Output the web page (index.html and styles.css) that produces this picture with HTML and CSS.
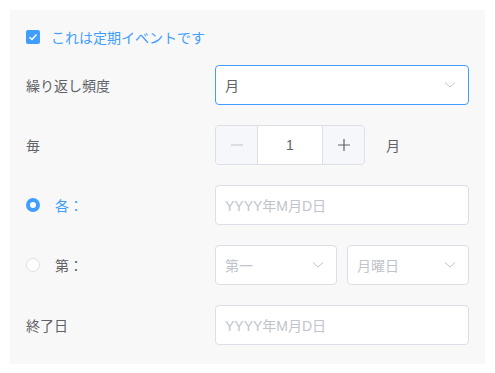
FILE: index.html
```html
<!DOCTYPE html>
<html lang="ja">
  <head>
    <meta charset="UTF-8" />
    <meta name="viewport" content="width=device-width, initial-scale=1.0" />
    <title>定期イベント</title>
    <link rel="stylesheet" href="styles.css">
  </head>
  <body>
    <div class="panel">
      <label class="check-row">
        <span class="checkbox">
          <svg width="10" height="8" viewBox="0 0 10 8"><path d="M1.5 4.2 L4 6.5 L8.5 1.5" fill="none" stroke="#fff" stroke-width="1.5"/></svg>
        </span>
        <span class="check-label">これは定期イベントです</span>
      </label>

      <div class="form-row">
        <div class="label">繰り返し頻度</div>
        <div class="select is-focus">
          <span class="select-value">月</span>
          <svg class="arrow" width="12" height="8" viewBox="0 0 12 8"><path d="M1 1.5 L6 6 L11 1.5" fill="none" stroke="#c0c4cc" stroke-width="1"/></svg>
        </div>
      </div>

      <div class="form-row">
        <div class="label">毎</div>
        <div class="counter">
          <span class="counter-btn is-disabled">
            <svg width="14" height="14" viewBox="0 0 14 14"><path d="M1 7 H13" stroke="#c0c4cc" stroke-width="1.2"/></svg>
          </span>
          <span class="counter-value">1</span>
          <span class="counter-btn">
            <svg width="14" height="14" viewBox="0 0 14 14"><path d="M1 7 H13 M7 1 V13" stroke="#606266" stroke-width="1.2"/></svg>
          </span>
        </div>
        <span class="unit">月</span>
      </div>

      <div class="form-row">
        <div class="label">
          <span class="radio is-checked"></span>
          <span class="radio-label is-active">各：</span>
        </div>
        <div class="input placeholder">YYYY年M月D日</div>
      </div>

      <div class="form-row">
        <div class="label">
          <span class="radio"></span>
          <span class="radio-label">第：</span>
        </div>
        <div class="select-pair">
          <div class="select">
            <span class="placeholder">第一</span>
            <svg class="arrow" width="12" height="8" viewBox="0 0 12 8"><path d="M1 1.5 L6 6 L11 1.5" fill="none" stroke="#c0c4cc" stroke-width="1"/></svg>
          </div>
          <div class="select">
            <span class="placeholder">月曜日</span>
            <svg class="arrow" width="12" height="8" viewBox="0 0 12 8"><path d="M1 1.5 L6 6 L11 1.5" fill="none" stroke="#c0c4cc" stroke-width="1"/></svg>
          </div>
        </div>
      </div>

      <div class="form-row">
        <div class="label">終了日</div>
        <div class="input placeholder">YYYY年M月D日</div>
      </div>
    </div>
  </body>
</html>
```

FILE: styles.css
```css
body {
  margin: 0;
  padding: 10px;
  background-color: #fff;
  font-family: "Liberation Sans", "Noto Sans CJK JP", sans-serif;
  font-size: 14px;
  color: #606266;
}
.panel {
  width: 443px;
  height: 317px;
  background-color: #f8f8f9;
  padding: 17px 16px 20px;
}
.check-row {
  display: flex;
  align-items: center;
  height: 20px;
  margin-bottom: 18px;
}
.checkbox {
  width: 14px;
  height: 14px;
  border-radius: 2px;
  background-color: #409eff;
  display: flex;
  justify-content: center;
  align-items: center;
  margin-right: 11px;
}
.check-label {
  color: #409eff;
}
.form-row {
  display: flex;
  align-items: center;
  height: 40px;
  margin-bottom: 20px;
}
.form-row:last-child {
  margin-bottom: 0;
}
.label {
  width: 189px;
  display: flex;
  align-items: center;
}
.select,
.input {
  box-sizing: border-box;
  height: 40px;
  width: 254px;
  background-color: #fff;
  border: 1px solid #dcdfe6;
  border-radius: 4px;
  padding: 0 12px 0 9px;
  display: flex;
  align-items: center;
}
.select {
  justify-content: space-between;
}
.select.is-focus {
  border-color: #409eff;
}
.select-value {
  color: #606266;
}
.placeholder {
  color: #c0c4cc;
}
.select-pair {
  display: flex;
  gap: 10px;
}
.select-pair .select {
  width: 122px;
}
.counter {
  box-sizing: border-box;
  height: 40px;
  width: 150px;
  border: 1px solid #dcdfe6;
  border-radius: 4px;
  display: flex;
  overflow: hidden;
}
.counter-btn {
  width: 41px;
  background-color: #f5f7fa;
  display: flex;
  justify-content: center;
  align-items: center;
}
.counter-btn:first-child {
  border-right: 1px solid #dcdfe6;
}
.counter-btn:last-child {
  border-left: 1px solid #dcdfe6;
}
.counter-value {
  flex: 1;
  background-color: #fff;
  display: flex;
  justify-content: center;
  align-items: center;
}
.unit {
  margin-left: 21px;
}
.radio {
  box-sizing: border-box;
  width: 14px;
  height: 14px;
  border-radius: 50%;
  border: 1px solid #dcdfe6;
  background-color: #fff;
  margin-right: 15px;
}
.radio.is-checked {
  border: 4px solid #409eff;
}
.radio-label.is-active {
  color: #409eff;
}
```
